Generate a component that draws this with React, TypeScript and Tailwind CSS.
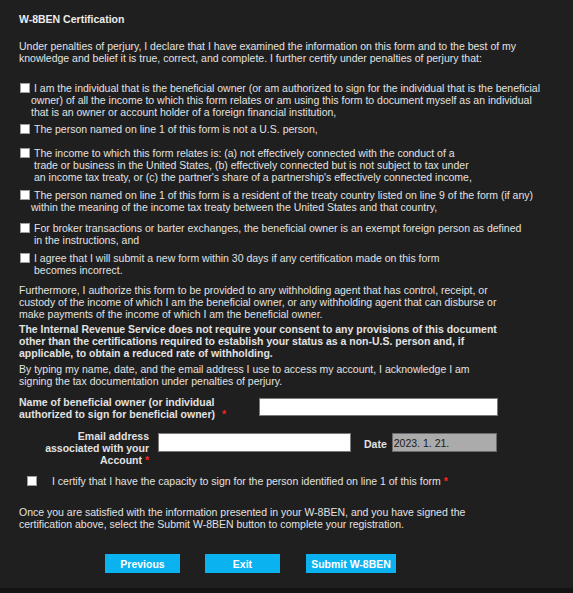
import React from 'react';

function Box({ className = '' }: { className?: string }) {
  return (
    <input
      type="checkbox"
      className={`appearance-none shrink-0 w-[10px] h-[10px] m-0 bg-white border border-[#9c9c9c] rounded-none ${className}`}
    />
  );
}

function Star({ className = '' }: { className?: string }) {
  return <span className={`text-[#ff1f1f] font-bold ${className}`}>*</span>;
}

export default function App() {
  return (
    <div className="min-h-[593px] bg-[#1f1f1f] flex flex-col font-['Liberation_Sans',Arial,sans-serif] text-[10.5px] leading-[12px] text-[#e2e2e2] whitespace-nowrap">
      <div className="min-h-[588px] pl-[19px] pt-[13px] pb-[15px]">
        {/* Heading */}
        <div className="font-bold text-[#ececec]">W-8BEN Certification</div>

        <p className="mt-[15px]">
          Under penalties of perjury, I declare that I have examined the information on this form and to the best of my
          <br />
          knowledge and belief it is true, correct, and complete. I further certify under penalties of perjury that:
        </p>

        {/* Certification checkboxes */}
        <div className="mt-[18px] flex items-start">
          <Box className="mt-[1px] ml-[1px]" />
          <div className="pl-[1px] indent-[3px]">
            I am the individual that is the beneficial owner (or am authorized to sign for the individual that is the beneficial
            <br />
            owner) of all the income to which this form relates or am using this form to document myself as an individual
            <br />
            that is an owner or account holder of a foreign financial institution,
          </div>
        </div>

        <div className="mt-[5px] flex items-start">
          <Box className="mt-[1px] ml-[1px]" />
          <div className="pl-[4px]">The person named on line 1 of this form is not a U.S. person,</div>
        </div>

        <div className="mt-[12px] flex items-start">
          <Box className="mt-[1px] ml-[1px]" />
          <div className="pl-[4px]">
            The income to which this form relates is: (a) not effectively connected with the conduct of a
            <br />
            trade or business in the United States, (b) effectively connected but is not subject to tax under
            <br />
            an income tax treaty, or (c) the partner's share of a partnership's effectively connected income,
          </div>
        </div>

        <div className="mt-[6px] flex items-start">
          <Box className="mt-[1px] ml-[1px]" />
          <div className="pl-[1px] indent-[3px]">
            The person named on line 1 of this form is a resident of the treaty country listed on line 9 of the form (if any)
            <br />
            within the meaning of the income tax treaty between the United States and that country,
          </div>
        </div>

        <div className="mt-[9px] flex items-start">
          <Box className="mt-[1px] ml-[1px]" />
          <div className="pl-[4px]">
            For broker transactions or barter exchanges, the beneficial owner is an exempt foreign person as defined
            <br />
            in the instructions, and
          </div>
        </div>

        <div className="mt-[6px] flex items-start">
          <Box className="mt-[1px] ml-[1px]" />
          <div className="pl-[4px]">
            I agree that I will submit a new form within 30 days if any certification made on this form
            <br />
            becomes incorrect.
          </div>
        </div>

        <p className="mt-[8px]">
          Furthermore, I authorize this form to be provided to any withholding agent that has control, receipt, or
          <br />
          custody of the income of which I am the beneficial owner, or any withholding agent that can disburse or
          <br />
          make payments of the income of which I am the beneficial owner.
        </p>

        <p className="mt-[3px] font-bold">
          The Internal Revenue Service does not require your consent to any provisions of this document
          <br />
          other than the certifications required to establish your status as a non-U.S. person and, if
          <br />
          applicable, to obtain a reduced rate of withholding.
        </p>

        <p className="mt-[4px]">
          By typing my name, date, and the email address I use to access my account, I acknowledge I am
          <br />
          signing the tax documentation under penalties of perjury.
        </p>

        {/* Signature fields */}
        <div className="mt-[9px] flex items-start">
          <div className="w-[240px] font-bold">
            Name of beneficial owner (or individual
            <br />
            authorized to sign for beneficial owner)
            <Star className="ml-[7px]" />
          </div>
          <input type="text" className="mt-[2px] w-[239px] h-[18px] bg-white border border-[#7a7a7a] outline-none" />
        </div>

        <div className="mt-[10px] flex items-start">
          <div className="w-[130px] text-right font-bold">
            Email address
            <br />
            associated with your
            <br />
            Account <Star />
          </div>
          <input type="text" className="ml-[9px] mt-[3px] w-[193px] h-[19px] bg-white border border-[#7a7a7a] outline-none" />
          <span className="ml-[13px] mt-[8px] font-bold">Date</span>
          <input
            type="text"
            readOnly
            value="2023. 1. 21."
            className="ml-[5px] mt-[3px] w-[105px] h-[19px] bg-[#ababab] border border-[#6a6a6a] pl-[1px] text-[#1a1a1a] text-[10.5px] outline-none"
          />
        </div>

        <div className="mt-[9px] flex items-start">
          <Box className="mt-[1px] ml-[8px]" />
          <div className="ml-[15px]">
            I certify that I have the capacity to sign for the person identified on line 1 of this form <Star />
          </div>
        </div>

        <p className="mt-[19px]">
          Once you are satisfied with the information presented in your W-8BEN, and you have signed the
          <br />
          certification above, select the Submit W-8BEN button to complete your registration.
        </p>

        {/* Actions */}
        <div className="mt-[24px] ml-[86px] flex">
          <button className="w-[75px] h-[19px] bg-[#0ab2f0] text-white font-bold">Previous</button>
          <button className="ml-[25px] w-[75px] h-[19px] bg-[#0ab2f0] text-white font-bold">Exit</button>
          <button className="ml-[26px] w-[90px] h-[19px] bg-[#0ab2f0] text-white font-bold">Submit W-8BEN</button>
        </div>
      </div>
      <div className="h-[5px] bg-[#141414]" />
    </div>
  );
}
